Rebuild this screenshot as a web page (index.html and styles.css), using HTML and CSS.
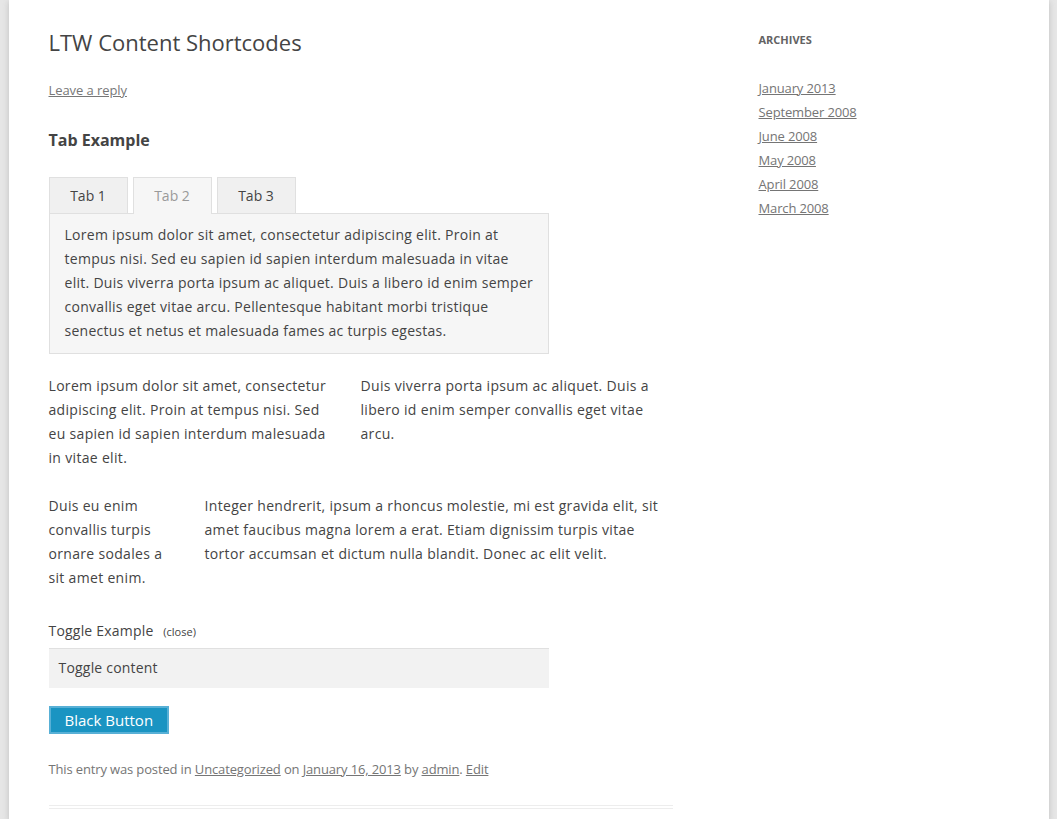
FILE: index.html
```html
<!DOCTYPE html>
<html lang="en">
<head>
<meta charset="utf-8">
<title>LTW Content Shortcodes</title>
<link rel="stylesheet" href="styles.css">
</head>
<body>
<div class="site">
  <div class="site-main">
    <main class="content">
      <article class="post">
        <header class="entry-header">
          <h1 class="entry-title">LTW Content Shortcodes</h1>
          <div class="comments-link"><a href="#">Leave a reply</a></div>
        </header>
        <div class="entry-content">
          <h3 class="section-title">Tab Example</h3>
          <div class="tabs">
            <ul class="tab-nav">
              <li class="tab">Tab 1</li>
              <li class="tab tab-active">Tab 2</li>
              <li class="tab">Tab 3</li>
            </ul>
            <div class="tab-panel">Lorem ipsum dolor sit amet, consectetur adipiscing elit. Proin at tempus nisi. Sed eu sapien id sapien interdum malesuada in vitae elit. Duis viverra porta ipsum ac aliquet. Duis a libero id enim semper convallis eget vitae arcu. Pellentesque habitant morbi tristique senectus et netus et malesuada fames ac turpis egestas.</div>
          </div>
          <div class="cols cols-half">
            <p>Lorem ipsum dolor sit amet, consectetur adipiscing elit. Proin at tempus nisi. Sed eu sapien id sapien interdum malesuada in vitae elit.</p>
            <p>Duis viverra porta ipsum ac aliquet. Duis a libero id enim semper convallis eget vitae arcu.</p>
          </div>
          <div class="cols cols-quarter">
            <p>Duis eu enim convallis turpis ornare sodales a sit amet enim.</p>
            <p>Integer hendrerit, ipsum a rhoncus molestie, mi est gravida elit, sit amet faucibus magna lorem a erat. Etiam dignissim turpis vitae tortor accumsan et dictum nulla blandit. Donec ac elit velit.</p>
          </div>
          <div class="toggle">
            <div class="toggle-title">Toggle Example <span class="toggle-close">(close)</span></div>
            <div class="toggle-body">Toggle content</div>
          </div>
          <a href="#" class="btn">Black Button</a>
        </div>
        <footer class="entry-meta">This entry was posted in <a href="#">Uncategorized</a> on <a href="#">January 16, 2013</a> by <a href="#">admin</a>. <a href="#">Edit</a></footer>
      </article>
    </main>
    <aside class="sidebar">
      <h3 class="widget-title">Archives</h3>
      <ul class="archive-list">
        <li><a href="#">January 2013</a></li>
        <li><a href="#">September 2008</a></li>
        <li><a href="#">June 2008</a></li>
        <li><a href="#">May 2008</a></li>
        <li><a href="#">April 2008</a></li>
        <li><a href="#">March 2008</a></li>
      </ul>
    </aside>
  </div>
</div>
</body>
</html>
```
FILE: styles.css
```css
html, body {
  margin: 0;
  padding: 0;
  height: 100%;
  overflow: hidden;
}
body {
  background: #e6e6e6;
  font-family: "Open Sans", "Liberation Sans", sans-serif;
  font-size: 14px;
  line-height: 24px;
  color: #444;
}
a {
  color: #757575;
}
.site {
  width: 960px;
  padding: 0 40px;
  margin: 0 auto;
  background: #fff;
  min-height: 100vh;
  box-shadow: rgba(100, 100, 100, 0.3) 0 2px 6px;
}
.site-main {
  display: flex;
  justify-content: space-between;
}
.content {
  width: 624px;
  padding-top: 30px;
}
.entry-title {
  margin: 0;
  font-size: 22px;
  line-height: 24px;
  font-weight: normal;
  color: #444;
}
.comments-link {
  margin-top: 24px;
  font-size: 13px;
  line-height: 24px;
  letter-spacing: -0.08px;
}
.comments-link a {
  color: #777;
}
.section-title {
  margin: 24px 0 23px;
  font-size: 16px;
  line-height: 28px;
  font-weight: bold;
  color: #444;
}
.tab-nav {
  list-style: none;
  margin: 0;
  padding: 0;
  display: flex;
  gap: 5px;
}
.tab {
  box-sizing: border-box;
  height: 36px;
  width: 79px;
  padding: 5px 0;
  line-height: 25px;
  border: 1px solid #e0e0e0;
  border-bottom: 0;
  background: #f0f0f0;
  color: #444;
  font-size: 14px;
  text-align: center;
}
.tab-active {
  position: relative;
  z-index: 1;
  height: 37px;
  margin-bottom: -1px;
  background: #f6f6f6;
  color: #9a9a9a;
}
.tab-panel {
  width: 500px;
  box-sizing: border-box;
  border: 1px solid #e0e0e0;
  background: #f6f6f6;
  padding: 9px 12px 10px 15px;
  margin-bottom: 20px;
  letter-spacing: 0.28px;
}
.cols {
  display: grid;
  margin-bottom: 24px;
  letter-spacing: 0.32px;
}
.cols p {
  margin: 0;
}
.cols-half {
  grid-template-columns: 284px 300px;
  column-gap: 28px;
}
.cols-quarter {
  grid-template-columns: 125px 460px;
  column-gap: 31px;
  margin-bottom: 0;
}
.toggle {
  margin-top: 29px;
}
.toggle-title {
  line-height: 24px;
  margin-bottom: 4px;
  letter-spacing: 0.2px;
}
.toggle-close {
  font-size: 11px;
  margin-left: 6px;
  letter-spacing: 0;
}
.toggle-body {
  width: 500px;
  box-sizing: border-box;
  background: #f2f2f2;
  border-top: 1px solid #e0e0e0;
  padding: 7px 10px 8px;
  line-height: 24px;
  letter-spacing: 0.2px;
}
.btn {
  display: inline-block;
  margin-top: 18px;
  height: 28px;
  box-sizing: border-box;
  padding: 0 14px;
  border: 2px solid #58b0d6;
  background: #1a94c2;
  color: #fff;
  font-size: 15px;
  line-height: 24px;
  text-decoration: none;
}
.entry-meta {
  margin-top: 23px;
  padding-bottom: 24px;
  border-bottom: 4px double #ededed;
  font-size: 13px;
  line-height: 24px;
  color: #757575;
  letter-spacing: -0.14px;
}
.entry-meta a {
  color: #757575;
}
.sidebar {
  width: 250px;
  padding-top: 28px;
}
.widget-title {
  margin: 0;
  font-size: 11px;
  line-height: 24px;
  font-weight: bold;
  text-transform: uppercase;
  color: #636363;
}
.archive-list {
  list-style: none;
  margin: 24px 0 0;
  padding: 0;
  font-size: 13px;
  line-height: 24px;
  letter-spacing: -0.14px;
}
.archive-list a {
  color: #757575;
}
```
